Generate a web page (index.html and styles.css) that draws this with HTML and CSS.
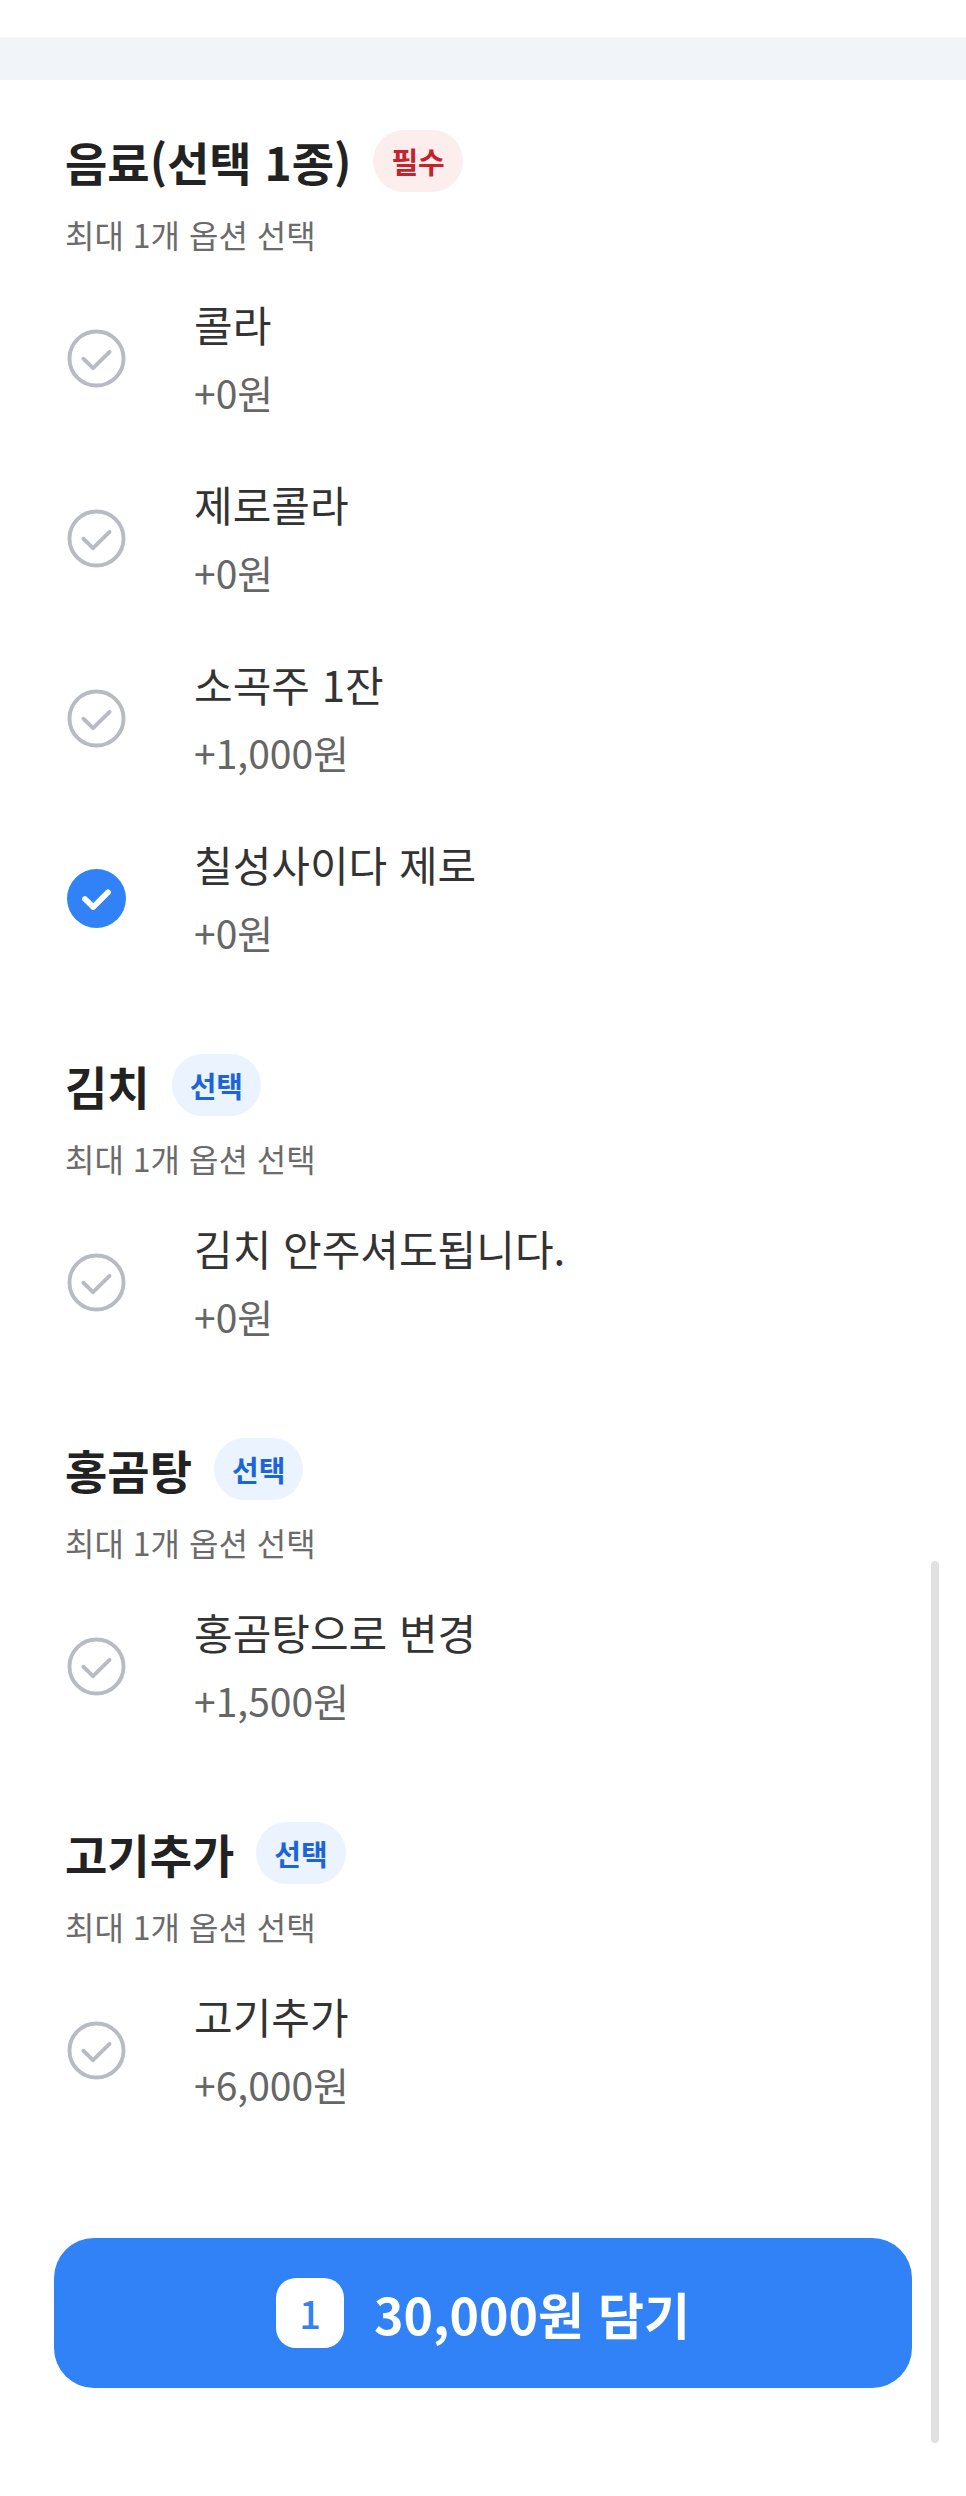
FILE: index.html
```html
<!DOCTYPE html>
<html lang="ko">
<head>
  <meta charset="utf-8" />
  <title>옵션 선택</title>
  <meta name="viewport" content="width=device-width, initial-scale=1" />
  <link rel="stylesheet" href="styles.css">
</head>
<body>
  <div class="page">
    <div class="top-space"></div>
    <div class="band"></div>

    <section class="group">
      <div class="group-head">
        <h2>음료(선택 1종)</h2>
        <span class="tag required">필수</span>
      </div>
      <p class="hint">최대 1개 옵션 선택</p>
      <ul class="options">
        <li class="option">
          <svg class="check" viewBox="0 0 24 24"><circle cx="12" cy="12" r="11" /><path d="M6.7 12.1l3.9 3.8 6.7-6.6" /></svg>
          <div class="option-text"><span class="name">콜라</span><span class="price">+0원</span></div>
        </li>
        <li class="option">
          <svg class="check" viewBox="0 0 24 24"><circle cx="12" cy="12" r="11" /><path d="M6.7 12.1l3.9 3.8 6.7-6.6" /></svg>
          <div class="option-text"><span class="name">제로콜라</span><span class="price">+0원</span></div>
        </li>
        <li class="option">
          <svg class="check" viewBox="0 0 24 24"><circle cx="12" cy="12" r="11" /><path d="M6.7 12.1l3.9 3.8 6.7-6.6" /></svg>
          <div class="option-text"><span class="name">소곡주 1잔</span><span class="price">+1,000원</span></div>
        </li>
        <li class="option">
          <svg class="check on" viewBox="0 0 24 24"><circle cx="12" cy="12" r="12" /><path d="M7.3 12.2l3.4 3.3 6-6" /></svg>
          <div class="option-text"><span class="name">칠성사이다 제로</span><span class="price">+0원</span></div>
        </li>
      </ul>
    </section>

    <section class="group">
      <div class="group-head">
        <h2>김치</h2>
        <span class="tag optional">선택</span>
      </div>
      <p class="hint">최대 1개 옵션 선택</p>
      <ul class="options">
        <li class="option">
          <svg class="check" viewBox="0 0 24 24"><circle cx="12" cy="12" r="11" /><path d="M6.7 12.1l3.9 3.8 6.7-6.6" /></svg>
          <div class="option-text"><span class="name">김치 안주셔도됩니다.</span><span class="price">+0원</span></div>
        </li>
      </ul>
    </section>

    <section class="group">
      <div class="group-head">
        <h2>홍곰탕</h2>
        <span class="tag optional">선택</span>
      </div>
      <p class="hint">최대 1개 옵션 선택</p>
      <ul class="options">
        <li class="option">
          <svg class="check" viewBox="0 0 24 24"><circle cx="12" cy="12" r="11" /><path d="M6.7 12.1l3.9 3.8 6.7-6.6" /></svg>
          <div class="option-text"><span class="name">홍곰탕으로 변경</span><span class="price">+1,500원</span></div>
        </li>
      </ul>
    </section>

    <section class="group">
      <div class="group-head">
        <h2>고기추가</h2>
        <span class="tag optional">선택</span>
      </div>
      <p class="hint">최대 1개 옵션 선택</p>
      <ul class="options">
        <li class="option">
          <svg class="check" viewBox="0 0 24 24"><circle cx="12" cy="12" r="11" /><path d="M6.7 12.1l3.9 3.8 6.7-6.6" /></svg>
          <div class="option-text"><span class="name">고기추가</span><span class="price">+6,000원</span></div>
        </li>
      </ul>
    </section>

    <div class="footer">
      <button class="add-button">
        <span class="count">1</span>
        <span class="total">30,000원 담기</span>
      </button>
    </div>

    <div class="scrollbar"></div>
  </div>
</body>
</html>
```

FILE: styles.css
```css
* {
  box-sizing: border-box;
  margin: 0;
  padding: 0;
}
body {
  font-family: "Noto Sans CJK KR", "Noto Sans", sans-serif;
  background: #fff;
  color: #222;
}
.page {
  position: relative;
  width: 966px;
  min-height: 2496px;
}
.top-space {
  height: 37px;
}
.band {
  height: 43px;
  background-color: #f1f4f8;
}
.group {
  padding: 50px 0 16px 65px;
}
.group-head {
  display: flex;
  align-items: center;
  gap: 22px;
  height: 62px;
}
.group-head h2 {
  font-size: 46px;
  font-weight: 700;
  color: #222;
}
.tag {
  height: 62px;
  line-height: 62px;
  padding: 0 18px;
  border-radius: 31px;
  font-size: 29px;
  font-weight: 700;
}
.tag.required {
  background-color: #fdeeee;
  color: #c5222c;
}
.tag.optional {
  background-color: #ebf3fe;
  color: #1b64da;
}
.hint {
  margin-top: 20px;
  font-size: 32px;
  line-height: 44px;
  color: #6b6b6b;
}
.options {
  list-style: none;
  margin-top: 12px;
}
.option {
  display: flex;
  align-items: center;
  gap: 68px;
  height: 180px;
  padding-left: 2px;
}
.check {
  width: 59px;
  height: 59px;
  flex-shrink: 0;
}
.check circle {
  fill: none;
  stroke: #b8bcc2;
  stroke-width: 1.6;
}
.check path {
  fill: none;
  stroke: #b8bcc2;
  stroke-width: 1.6;
  stroke-linecap: round;
  stroke-linejoin: round;
}
.check.on circle {
  fill: #3182f6;
  stroke: none;
}
.check.on path {
  stroke: #fff;
  stroke-width: 2.3;
}
.option-text {
  display: flex;
  flex-direction: column;
  gap: 10px;
}
.name {
  font-size: 42px;
  line-height: 58px;
  color: #333;
}
.price {
  font-size: 39px;
  line-height: 58px;
  color: #666;
}
.footer {
  padding: 82px 54px 0;
}
.add-button {
  width: 100%;
  height: 150px;
  border: none;
  border-radius: 40px;
  background-color: #3182f6;
  display: flex;
  justify-content: center;
  align-items: center;
  gap: 30px;
  font-family: inherit;
  cursor: pointer;
}
.count {
  width: 68px;
  height: 70px;
  border-radius: 20px;
  background-color: #fff;
  color: #3182f6;
  font-size: 38px;
  font-weight: 500;
  line-height: 70px;
  text-align: center;
}
.total {
  color: #fff;
  font-size: 50px;
  font-weight: 700;
}
.scrollbar {
  position: absolute;
  top: 1561px;
  right: 27px;
  width: 8px;
  height: 882px;
  border-radius: 4px;
  background-color: #e1e1e1;
}
```
